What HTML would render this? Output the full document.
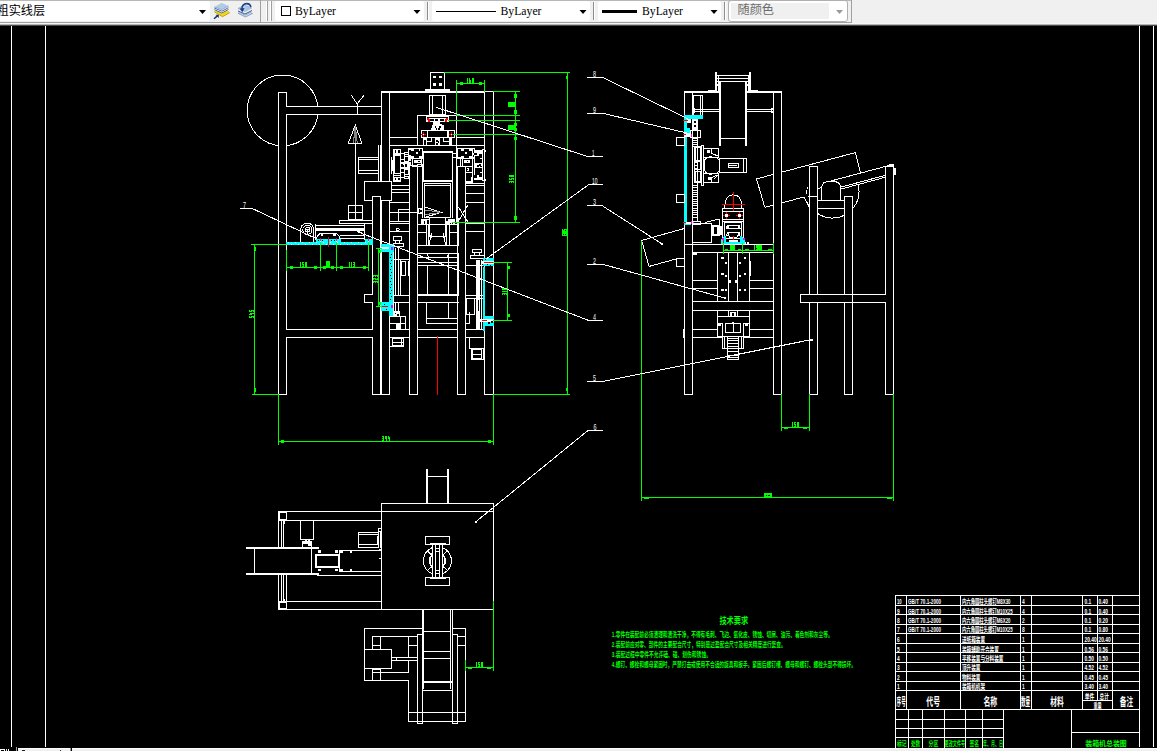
<!DOCTYPE html>
<html><head><meta charset="utf-8"><title>CAD</title>
<style>
html,body{margin:0;padding:0;background:#000;overflow:hidden}
body{width:1157px;height:751px;position:relative;font-family:"Liberation Sans",sans-serif}
#cv{position:absolute;left:0;top:0}
.t{font-family:"Liberation Sans","Noto Sans CJK SC",sans-serif;font-weight:bold}
.n{font-family:"Liberation Sans",sans-serif}
</style></head><body>
<svg id="cv" width="1157" height="751" viewBox="0 0 1157 751" shape-rendering="crispEdges" stroke-linecap="butt" fill="none">
<rect x="0" y="0" width="1157" height="751" style="fill:#000"/>
<path d="M11.5 26V747" stroke="#fff"/>
<path d="M45.5 26V747" stroke="#fff"/>
<path d="M1139.5 26V747" stroke="#fff"/>
<path d="M1153.5 26V747" stroke="#fff"/>
<circle cx="282.6" cy="110.4" r="35.4" stroke="#fff" fill="none"/>
<rect x="279" y="93" width="8" height="302" fill="#000"/>
<rect x="287" y="107" width="95" height="8" fill="#000"/>
<path d="M278.5 92V395" stroke="#fff"/>
<path d="M278 92.5H287" stroke="#fff"/>
<path d="M278 394.5H287" stroke="#fff"/>
<path d="M286.5 92V107" stroke="#fff"/>
<path d="M286.5 114V330" stroke="#fff"/>
<path d="M286.5 337V395" stroke="#fff"/>
<path d="M286 106.5H382" stroke="#fff"/>
<path d="M286 114.5H382" stroke="#fff"/>
<path d="M286 329.5H373" stroke="#fff"/>
<path d="M286 337.5H373" stroke="#fff"/>
<path d="M357.5 104V115" stroke="#fff"/>
<path d="M357.2 104.0L351.2 95.1" stroke="#fff"/>
<path d="M357.2 104.0L364.0 95.1" stroke="#fff"/>
<path d="M355.3 125.2L348.4 143.0L361.8 143.0Z" stroke="#fff" fill="none"/>
<path d="M355.3 126.0L353.4 143.0" stroke="#888"/>
<path d="M355.3 126.0L357.2 143.0" stroke="#888"/>
<path d="M355.5 127V144" stroke="#888"/>
<path d="M355.5 143V206" stroke="#fff"/>
<rect x="348.5" y="205.5" width="14" height="14" stroke="#fff" fill="none"/>
<path d="M355.5 205V220" stroke="#fff"/>
<path d="M348 212.5H363" stroke="#fff"/>
<rect x="339.5" y="220.5" width="33" height="3" stroke="#fff" fill="none"/>
<rect x="358.5" y="157.5" width="20" height="16" stroke="#fff" fill="none"/>
<path d="M358 159.5H379" stroke="#fff"/>
<path d="M358 170.5H379" stroke="#fff"/>
<path d="M378.5 145V182" stroke="#fff"/>
<path d="M380.5 145V182" stroke="#fff"/>
<rect x="373" y="197" width="8" height="198" fill="#000"/>
<path d="M372.5 196V295" stroke="#fff"/>
<path d="M372.5 302V330" stroke="#fff"/>
<path d="M372.5 337V395" stroke="#fff"/>
<path d="M380.5 196V395" stroke="#fff"/>
<path d="M372 196.5H381" stroke="#fff"/>
<path d="M372 394.5H381" stroke="#fff"/>
<rect x="365" y="295" width="15" height="8" fill="#000"/>
<rect x="373" y="330" width="7" height="8" fill="#000"/>
<path d="M364 294.5H373" stroke="#fff"/>
<path d="M364 302.5H373" stroke="#fff"/>
<path d="M364.5 294V303" stroke="#fff"/>
<path d="M315 225.5H365" stroke="#fff"/>
<rect x="315" y="228" width="50" height="3" fill="#fff"/>
<path d="M315.5 224V240" stroke="#fff"/>
<path d="M364.5 223V240" stroke="#fff"/>
<path d="M340 235.5H365" stroke="#fff"/>
<rect x="340" y="238" width="25" height="1" fill="#fff"/>
<path d="M300.5 242.0L300.5 229.5L302.0 225.5L305.0 223.4L309.5 223.4L312.5 225.5L313.8 229.5L313.8 242.0" stroke="#fff" fill="none"/>
<circle cx="307.4" cy="229.8" r="4.6" stroke="#fff" fill="none"/>
<circle cx="307.6" cy="229.6" r="2.2" stroke="#fff" fill="none"/>
<path d="M305 229.5H310" stroke="#fff"/>
<path d="M307.5 229V234" stroke="#fff"/>
<path d="M316.4 239.0L317.4 236.0L319.6 233.8L337.0 233.8L339.2 236.0L340.1 239.0" stroke="#fff" fill="none"/>
<rect x="321" y="234" width="2" height="2" fill="#fff"/>
<rect x="333" y="234" width="3" height="2" fill="#fff"/>
<rect x="286" y="242" width="87" height="3" fill="#00ffff"/>
<rect x="316" y="239" width="25" height="3" fill="#00ffff"/>
<rect x="365" y="239" width="8" height="3" fill="#00ffff"/>
<rect x="288" y="242" width="1" height="1" fill="#fff"/>
<rect x="291" y="244" width="1" height="1" fill="#fff"/>
<rect x="295" y="242" width="1" height="1" fill="#fff"/>
<rect x="298" y="244" width="1" height="1" fill="#fff"/>
<rect x="302" y="242" width="1" height="1" fill="#fff"/>
<rect x="305" y="244" width="1" height="1" fill="#fff"/>
<rect x="309" y="242" width="1" height="1" fill="#fff"/>
<rect x="312" y="244" width="1" height="1" fill="#fff"/>
<rect x="316" y="242" width="1" height="1" fill="#fff"/>
<rect x="319" y="244" width="1" height="1" fill="#fff"/>
<rect x="323" y="242" width="1" height="1" fill="#fff"/>
<rect x="326" y="244" width="1" height="1" fill="#fff"/>
<rect x="330" y="242" width="1" height="1" fill="#fff"/>
<rect x="333" y="244" width="1" height="1" fill="#fff"/>
<rect x="337" y="242" width="1" height="1" fill="#fff"/>
<rect x="340" y="244" width="1" height="1" fill="#fff"/>
<rect x="344" y="242" width="1" height="1" fill="#fff"/>
<rect x="347" y="244" width="1" height="1" fill="#fff"/>
<rect x="351" y="242" width="1" height="1" fill="#fff"/>
<rect x="354" y="244" width="1" height="1" fill="#fff"/>
<rect x="358" y="242" width="1" height="1" fill="#fff"/>
<rect x="361" y="244" width="1" height="1" fill="#fff"/>
<rect x="365" y="242" width="1" height="1" fill="#fff"/>
<rect x="368" y="244" width="1" height="1" fill="#fff"/>
<rect x="318" y="240" width="1" height="1" fill="#000"/>
<rect x="322" y="240" width="1" height="1" fill="#000"/>
<rect x="331" y="240" width="1" height="1" fill="#000"/>
<rect x="334" y="240" width="1" height="1" fill="#000"/>
<path d="M328.5 237V247" stroke="#ff0000"/>
<rect x="320" y="238" width="1" height="2" fill="#ff0000"/>
<rect x="320" y="239" width="1" height="2" fill="#ff00ff"/>
<rect x="320" y="241" width="1" height="4" fill="#fff"/>
<rect x="336" y="238" width="1" height="2" fill="#ff0000"/>
<rect x="336" y="239" width="1" height="2" fill="#ff00ff"/>
<rect x="336" y="241" width="1" height="4" fill="#fff"/>
<rect x="368" y="238" width="1" height="2" fill="#ff0000"/>
<rect x="368" y="239" width="1" height="2" fill="#ff00ff"/>
<rect x="368" y="241" width="1" height="4" fill="#fff"/>
<path d="M357.8 231.4L361.0 232.6" stroke="#fff"/>
<rect x="381" y="91" width="104" height="2" fill="#fff"/>
<path d="M484 91.5H494" stroke="#fff"/>
<path d="M381.5 91V395" stroke="#fff"/>
<path d="M389.5 93V395" stroke="#fff"/>
<path d="M484.5 93V395" stroke="#fff"/>
<path d="M493.5 91V395" stroke="#fff"/>
<path d="M381 394.5H390" stroke="#fff"/>
<path d="M484 394.5H494" stroke="#fff"/>
<rect x="430.5" y="72.5" width="14" height="17" stroke="#fff" fill="none"/>
<rect x="425" y="89" width="25" height="2" fill="#fff"/>
<rect x="433" y="76" width="3" height="2" fill="#fff"/>
<rect x="439" y="76" width="3" height="2" fill="#fff"/>
<rect x="433" y="83" width="3" height="3" fill="#fff"/>
<rect x="439" y="83" width="3" height="3" fill="#fff"/>
<rect x="429.5" y="95.5" width="16" height="19" stroke="#fff" fill="none"/>
<path d="M432.5 95V115" stroke="#fff"/>
<path d="M442.5 95V115" stroke="#fff"/>
<rect x="417.5" y="115.5" width="39" height="30" stroke="#fff" fill="none"/>
<path d="M389 137.5H418" stroke="#fff"/>
<path d="M456 137.5H485" stroke="#fff"/>
<path d="M389 145.5H485" stroke="#fff"/>
<path d="M426 116.5H449" stroke="#fff"/>
<path d="M426.5 116V122" stroke="#fff"/>
<path d="M448.5 116V122" stroke="#fff"/>
<rect x="426" y="118" width="23" height="4" fill="#fff"/>
<rect x="430" y="119" width="4" height="2" fill="#000"/>
<rect x="440" y="119" width="4" height="2" fill="#000"/>
<rect x="435" y="119" width="3" height="2" fill="#000"/>
<rect x="427" y="118" width="2" height="2" fill="#ff0000"/>
<rect x="428" y="119" width="2" height="3" fill="#ff0000"/>
<rect x="446" y="118" width="2" height="2" fill="#ff0000"/>
<rect x="445" y="119" width="2" height="3" fill="#ff0000"/>
<rect x="433" y="121" width="7" height="6" fill="#fff"/>
<rect x="440" y="124" width="2" height="3" fill="#fff"/>
<rect x="432" y="125" width="12" height="5" fill="#fff"/>
<rect x="431" y="128" width="13" height="2" fill="#fff"/>
<rect x="435" y="126" width="1" height="2" fill="#000"/>
<rect x="439" y="126" width="2" height="2" fill="#000"/>
<rect x="436" y="128" width="1" height="2" fill="#000"/>
<rect x="438" y="128" width="2" height="2" fill="#000"/>
<rect x="421" y="130" width="34" height="8" fill="#fff"/>
<rect x="428" y="131" width="19" height="6" fill="#000"/>
<rect x="422" y="131" width="5" height="6" fill="#000"/>
<rect x="449" y="131" width="5" height="6" fill="#000"/>
<path d="M421 134.5H423" stroke="#ff0000"/>
<path d="M424 134.5H426" stroke="#ff0000"/>
<rect x="423" y="132" width="1" height="2" fill="#ff0000"/>
<rect x="423" y="135" width="1" height="2" fill="#ff0000"/>
<rect x="423" y="134" width="1" height="1" fill="#fff"/>
<path d="M449 134.5H451" stroke="#ff0000"/>
<path d="M452 134.5H454" stroke="#ff0000"/>
<rect x="451" y="132" width="1" height="2" fill="#ff0000"/>
<rect x="451" y="135" width="1" height="2" fill="#ff0000"/>
<rect x="451" y="134" width="1" height="1" fill="#fff"/>
<rect x="423" y="137" width="4" height="9" fill="#fff"/>
<rect x="449" y="137" width="3" height="9" fill="#fff"/>
<rect x="424" y="140" width="2" height="5" fill="#000"/>
<path d="M426.5 141.6L431.8 141.6L431.8 138.0" stroke="#fff" fill="none"/>
<path d="M449.0 141.6L443.6 141.6L443.6 138.0" stroke="#fff" fill="none"/>
<rect x="435" y="138" width="5" height="8" fill="#fff"/>
<rect x="436" y="140" width="2" height="2" fill="#000"/>
<rect x="438" y="141" width="1" height="2" fill="#000"/>
<rect x="436" y="143" width="2" height="2" fill="#000"/>
<rect x="422" y="151" width="31" height="2" fill="#fff"/>
<rect x="422" y="180" width="31" height="2" fill="#fff"/>
<path d="M423.5 151V182" stroke="#fff"/>
<path d="M452.5 151V182" stroke="#fff"/>
<rect x="424.5" y="183.5" width="26" height="34" stroke="#fff" fill="none"/>
<path d="M424 185.5H451" stroke="#fff"/>
<path d="M452.5 181V218" stroke="#fff"/>
<path d="M456.5 145V223" stroke="#fff"/>
<path d="M422.5 165V218" stroke="#fff"/>
<path d="M417.5 165V395" stroke="#fff"/>
<path d="M409.5 165V395" stroke="#fff"/>
<path d="M457.5 166V395" stroke="#fff"/>
<path d="M465.5 166V395" stroke="#fff"/>
<path d="M409 394.5H418" stroke="#fff"/>
<path d="M457 394.5H466" stroke="#fff"/>
<path d="M424.5 207.0L441.4 212.4L424.5 217.4" stroke="#fff" fill="none"/>
<path d="M425.0 210.0L441.0 212.3" stroke="#999"/>
<path d="M425.0 214.6L441.0 212.5" stroke="#999"/>
<rect x="417" y="208" width="6" height="6" fill="#fff"/>
<rect x="419" y="209" width="1" height="2" fill="#000"/>
<rect x="420" y="210" width="2" height="2" fill="#000"/>
<rect x="419" y="211" width="1" height="2" fill="#000"/>
<path d="M409 212.5H418" stroke="#fff"/>
<path d="M458.3 207.0L467.7 221.5" stroke="#fff"/>
<path d="M467.7 205.2L458.3 221.5" stroke="#fff"/>
<rect x="393.5" y="149.5" width="7" height="32" stroke="#fff" fill="none"/>
<rect x="394.5" y="149.5" width="6" height="4" stroke="#fff" fill="none"/>
<path d="M393 154.5H401" stroke="#fff"/>
<rect x="396" y="150" width="2" height="3" fill="#fff"/>
<rect x="394.5" y="155.5" width="6" height="18" stroke="#fff" fill="none"/>
<rect x="394.5" y="177.5" width="6" height="3" stroke="#fff" fill="none"/>
<rect x="396" y="178" width="2" height="2" fill="#fff"/>
<path d="M393 175.5H401" stroke="#fff"/>
<rect x="400.5" y="153.5" width="4" height="6" stroke="#fff" fill="none"/>
<rect x="404.5" y="152.5" width="4" height="2" stroke="#fff" fill="none"/>
<rect x="400" y="160" width="8" height="3" fill="#fff"/>
<rect x="401" y="160" width="4" height="2" fill="#000"/>
<rect x="405" y="157" width="3" height="4" fill="#000"/>
<rect x="400" y="163" width="8" height="5" fill="#fff"/>
<rect x="401" y="164" width="2" height="3" fill="#000"/>
<rect x="403" y="165" width="2" height="2" fill="#000"/>
<rect x="405" y="164" width="2" height="3" fill="#000"/>
<rect x="400" y="168" width="8" height="3" fill="#fff"/>
<rect x="401" y="169" width="4" height="2" fill="#000"/>
<rect x="405" y="170" width="3" height="5" fill="#000"/>
<rect x="400.5" y="172.5" width="4" height="5" stroke="#fff" fill="none"/>
<rect x="404.5" y="176.5" width="4" height="2" stroke="#fff" fill="none"/>
<rect x="404.5" y="156.5" width="4" height="18" stroke="#fff" fill="none"/>
<rect x="408" y="148" width="15" height="11" fill="#fff"/>
<rect x="411" y="151" width="11" height="5" fill="#000"/>
<rect x="414" y="149" width="5" height="9" fill="#000"/>
<rect x="416" y="152" width="2" height="2" fill="#fff"/>
<rect x="409" y="150" width="2" height="5" fill="#000"/>
<rect x="420" y="149" width="2" height="3" fill="#000"/>
<rect x="412.5" y="158.5" width="9" height="8" stroke="#fff" fill="none"/>
<rect x="414" y="160" width="7" height="3" fill="#fff"/>
<rect x="418" y="161" width="2" height="1" fill="#000"/>
<rect x="409.5" y="159.5" width="1" height="1" stroke="#fff" fill="none"/>
<rect x="409.5" y="162.5" width="1" height="3" stroke="#fff" fill="none"/>
<path d="M391.5 157V174" stroke="#fff"/>
<path d="M392.5 160V171" stroke="#fff"/>
<rect x="457" y="148" width="18" height="11" fill="#fff"/>
<rect x="461" y="151" width="11" height="5" fill="#000"/>
<rect x="464" y="149" width="5" height="9" fill="#000"/>
<rect x="465" y="152" width="2" height="2" fill="#fff"/>
<rect x="458" y="149" width="3" height="8" fill="#000"/>
<rect x="473" y="149" width="1" height="4" fill="#000"/>
<rect x="473" y="155" width="1" height="2" fill="#000"/>
<rect x="462.5" y="158.5" width="10" height="8" stroke="#fff" fill="none"/>
<rect x="464" y="160" width="6" height="3" fill="#fff"/>
<rect x="467" y="161" width="1" height="1" fill="#000"/>
<path d="M460.5 158V167" stroke="#fff"/>
<path d="M472.5 148V184" stroke="#fff"/>
<rect x="467" y="168" width="2" height="3" fill="#fff"/>
<rect x="467" y="169" width="1" height="1" fill="#000"/>
<rect x="466" y="172" width="7" height="11" fill="#fff"/>
<rect x="466" y="176" width="5" height="5" fill="#000"/>
<rect x="468" y="173" width="4" height="4" fill="#000"/>
<rect x="466" y="173" width="2" height="3" fill="#000"/>
<rect x="474" y="150" width="9" height="30" fill="#fff"/>
<rect x="475" y="156" width="5" height="7" fill="#000"/>
<rect x="475" y="159" width="8" height="4" fill="#000"/>
<rect x="475" y="168" width="5" height="7" fill="#000"/>
<rect x="475" y="168" width="8" height="4" fill="#000"/>
<rect x="479" y="154" width="4" height="4" fill="#000"/>
<rect x="479" y="173" width="4" height="4" fill="#000"/>
<rect x="474" y="153" width="3" height="2" fill="#000"/>
<rect x="474" y="175" width="3" height="3" fill="#000"/>
<rect x="477" y="165" width="2" height="2" fill="#000"/>
<rect x="479" y="164" width="2" height="2" fill="#000"/>
<rect x="480" y="166" width="2" height="1" fill="#000"/>
<rect x="482.5" y="149.5" width="2" height="31" stroke="#fff" fill="none"/>
<rect x="485" y="150" width="1" height="2" fill="#fff"/>
<rect x="485" y="179" width="1" height="2" fill="#fff"/>
<path d="M466 183.5H485" stroke="#fff"/>
<path d="M452 153.5H458" stroke="#fff"/>
<path d="M452 157.5H458" stroke="#fff"/>
<path d="M389 185.5H410" stroke="#fff"/>
<path d="M389 189.5H410" stroke="#fff"/>
<path d="M389 192.5H410" stroke="#fff"/>
<path d="M389 202.5H410" stroke="#fff"/>
<path d="M389 212.5H410" stroke="#fff"/>
<path d="M389 221.5H410" stroke="#fff"/>
<path d="M389 223.5H410" stroke="#fff"/>
<path d="M389 231.5H410" stroke="#fff"/>
<path d="M389 259.5H410" stroke="#fff"/>
<path d="M389 295.5H410" stroke="#fff"/>
<path d="M389 302.5H410" stroke="#fff"/>
<rect x="398.5" y="209.5" width="11" height="12" stroke="#fff" fill="none"/>
<path d="M465 185.5H485" stroke="#fff"/>
<path d="M465 193.5H485" stroke="#fff"/>
<path d="M465 202.5H485" stroke="#fff"/>
<path d="M465 222.5H485" stroke="#fff"/>
<path d="M465 223.5H485" stroke="#fff"/>
<path d="M465 231.5H485" stroke="#fff"/>
<path d="M465 265.5H485" stroke="#fff"/>
<path d="M465 295.5H485" stroke="#fff"/>
<path d="M465 298.5H485" stroke="#fff"/>
<path d="M452 222.5H466" stroke="#fff"/>
<rect x="364.5" y="181.5" width="27" height="19" stroke="#fff" fill="#000"/>
<rect x="373" y="197" width="8" height="4" fill="#000"/>
<path d="M372.5 196V201" stroke="#fff"/>
<path d="M380.5 196V201" stroke="#fff"/>
<path d="M372 196.5H381" stroke="#fff"/>
<path d="M409 165.5H418" stroke="#fff"/>
<path d="M417 164.5H423" stroke="#fff"/>
<path d="M457 166.5H466" stroke="#fff"/>
<rect x="417.5" y="224.5" width="41" height="21" stroke="#fff" fill="none"/>
<path d="M417 232.5H427" stroke="#fff"/>
<path d="M449 232.5H459" stroke="#fff"/>
<path d="M426.5 224V246" stroke="#fff"/>
<path d="M428.5 224V246" stroke="#fff"/>
<path d="M446.5 224V246" stroke="#fff"/>
<path d="M449.5 224V246" stroke="#fff"/>
<path d="M429.5 218V237" stroke="#fff"/>
<path d="M445.5 218V237" stroke="#fff"/>
<path d="M429 236.5H446" stroke="#fff"/>
<path d="M431.3 233.3L429.0 244.6" stroke="#fff"/>
<path d="M443.3 233.3L445.6 244.6" stroke="#fff"/>
<path d="M431.5 233V238" stroke="#fff"/>
<path d="M443.5 233V238" stroke="#fff"/>
<rect x="421" y="219" width="9" height="5" fill="#fff"/>
<rect x="445" y="219" width="10" height="5" fill="#fff"/>
<rect x="424" y="221" width="1" height="1" fill="#000"/>
<rect x="424" y="222" width="1" height="2" fill="#000"/>
<rect x="427" y="220" width="2" height="2" fill="#000"/>
<rect x="427" y="222" width="2" height="2" fill="#000"/>
<rect x="446" y="219" width="2" height="2" fill="#000"/>
<rect x="450" y="223" width="1" height="1" fill="#000"/>
<rect x="452" y="223" width="1" height="1" fill="#000"/>
<path d="M417.5 218V225" stroke="#fff"/>
<path d="M458.5 218V225" stroke="#fff"/>
<rect x="417.5" y="253.5" width="41" height="42" stroke="#fff" fill="none"/>
<path d="M417 257.5H459" stroke="#fff"/>
<path d="M417 262.5H459" stroke="#fff"/>
<path d="M417 265.5H459" stroke="#fff"/>
<path d="M427.5 265V295" stroke="#fff"/>
<path d="M448.5 253V295" stroke="#fff"/>
<path d="M417 294.5H459" stroke="#fff"/>
<path d="M427.0 254.0L429.0 258.0" stroke="#fff"/>
<path d="M448.3 254.0L446.5 258.0" stroke="#fff"/>
<path d="M417 302.5H459" stroke="#fff"/>
<rect x="426.5" y="302.5" width="22" height="16" stroke="#fff" fill="none"/>
<rect x="426.5" y="318.5" width="31" height="5" stroke="#fff" fill="none"/>
<path d="M389 329.5H410" stroke="#fff"/>
<path d="M417 329.5H458" stroke="#fff"/>
<path d="M465 329.5H485" stroke="#fff"/>
<path d="M389 337.5H410" stroke="#fff"/>
<path d="M417 337.5H458" stroke="#fff"/>
<path d="M465 337.5H485" stroke="#fff"/>
<path d="M437.5 336V395" stroke="#ff0000"/>
<circle cx="397.9" cy="229.6" r="1.4" stroke="#fff" fill="none"/>
<rect x="393.5" y="236.5" width="8" height="4" stroke="#fff" fill="none"/>
<rect x="395.5" y="240.5" width="4" height="3" stroke="#fff" fill="none"/>
<rect x="393.5" y="243.5" width="10" height="3" stroke="#fff" fill="none"/>
<path d="M472.1 252.6L472.1 250.4L473.4 249.4L480.6 249.4L481.8 250.4L481.8 252.6Z" stroke="#fff" fill="none"/>
<rect x="474.5" y="252.5" width="5" height="3" stroke="#fff" fill="none"/>
<rect x="470.5" y="255.5" width="14" height="3" stroke="#fff" fill="none"/>
<rect x="381" y="244" width="13" height="8" fill="#00ffff"/>
<rect x="381" y="247" width="8" height="2" fill="#fff"/>
<rect x="391" y="247" width="2" height="3" fill="#ff00ff"/>
<rect x="389" y="252" width="5" height="50" fill="#00ffff"/>
<rect x="391" y="254" width="1" height="1" fill="#000"/>
<rect x="390" y="257" width="1" height="1" fill="#000"/>
<rect x="391" y="260" width="1" height="1" fill="#000"/>
<rect x="390" y="263" width="1" height="1" fill="#000"/>
<rect x="391" y="266" width="1" height="1" fill="#000"/>
<rect x="390" y="269" width="1" height="1" fill="#000"/>
<rect x="391" y="272" width="1" height="1" fill="#000"/>
<rect x="390" y="275" width="1" height="1" fill="#000"/>
<rect x="391" y="278" width="1" height="1" fill="#000"/>
<rect x="390" y="281" width="1" height="1" fill="#000"/>
<rect x="391" y="284" width="1" height="1" fill="#000"/>
<rect x="390" y="287" width="1" height="1" fill="#000"/>
<rect x="391" y="290" width="1" height="1" fill="#000"/>
<rect x="390" y="293" width="1" height="1" fill="#000"/>
<rect x="391" y="296" width="1" height="1" fill="#000"/>
<rect x="390" y="299" width="1" height="1" fill="#000"/>
<rect x="381" y="302" width="13" height="9" fill="#00ffff"/>
<rect x="389" y="310" width="5" height="7" fill="#00ffff"/>
<path d="M382 306.5H388" stroke="#ff0000"/>
<rect x="391" y="305" width="2" height="3" fill="#ff00ff"/>
<rect x="384" y="304" width="1" height="1" fill="#000"/>
<rect x="386" y="309" width="1" height="1" fill="#000"/>
<rect x="393" y="311" width="7" height="6" fill="#fff"/>
<rect x="395" y="313" width="1" height="1" fill="#000"/>
<rect x="397" y="314" width="2" height="2" fill="#000"/>
<path d="M393.5 252V312" stroke="#fff"/>
<path d="M395.5 248V295" stroke="#fff"/>
<path d="M395.5 302V312" stroke="#fff"/>
<path d="M398.5 248V295" stroke="#fff"/>
<path d="M398.5 302V312" stroke="#fff"/>
<path d="M400.5 259V296" stroke="#fff"/>
<rect x="401.5" y="261.5" width="4" height="14" stroke="#fff" fill="none"/>
<path d="M408.5 261V276" stroke="#fff"/>
<rect x="389.5" y="316.5" width="16" height="13" stroke="#fff" fill="none"/>
<path d="M400.5 316V330" stroke="#fff"/>
<path d="M389 323.5H406" stroke="#fff"/>
<rect x="396" y="323" width="5" height="7" fill="#fff"/>
<rect x="389.5" y="337.5" width="14" height="9" stroke="#fff" fill="none"/>
<rect x="392.5" y="338.5" width="11" height="7" stroke="#fff" fill="none"/>
<path d="M392 342.5H404" stroke="#fff"/>
<path d="M401.5 338V346" stroke="#fff"/>
<rect x="483" y="258" width="11" height="8" fill="#00ffff"/>
<rect x="482" y="261" width="12" height="3" fill="#fff"/>
<path d="M484 262.5H493" stroke="#ff0000"/>
<rect x="487" y="264" width="1" height="1" fill="#000"/>
<rect x="490" y="265" width="1" height="1" fill="#000"/>
<rect x="485" y="259" width="1" height="1" fill="#000"/>
<rect x="483" y="267" width="2" height="64" fill="#00ffff"/>
<rect x="483" y="316" width="11" height="10" fill="#00ffff"/>
<rect x="480" y="319" width="14" height="3" fill="#fff"/>
<path d="M481 320.5H487" stroke="#ff0000"/>
<rect x="488" y="322" width="2" height="2" fill="#000"/>
<rect x="491" y="321" width="2" height="2" fill="#000"/>
<path d="M476.5 260V330" stroke="#fff"/>
<rect x="477" y="260" width="3" height="70" fill="#fff"/>
<path d="M481.5 260V330" stroke="#fff"/>
<rect x="478" y="300" width="1" height="11" fill="#000"/>
<rect x="466.5" y="298.5" width="8" height="16" stroke="#fff" fill="none"/>
<path d="M469.5 312V324" stroke="#fff"/>
<path d="M465 323.5H470" stroke="#fff"/>
<rect x="469.5" y="337.5" width="15" height="11" stroke="#fff" fill="none"/>
<rect x="471.5" y="348.5" width="12" height="11" stroke="#fff" fill="none"/>
<rect x="472.5" y="349.5" width="9" height="9" stroke="#fff" fill="none"/>
<path d="M472 354.5H482" stroke="#fff"/>
<path d="M380.5 329V338" stroke="#fff"/>
<path d="M444 72.5H570" stroke="#00ff00"/>
<path d="M567.5 72V395" stroke="#00ff00"/>
<path d="M493 394.5H570" stroke="#00ff00"/>
<path d="M562 235h1v1h-1zM563 235h1v1h-1zM564 235h1v1h-1zM565 235h1v1h-1zM566 235h1v1h-1zM562 234h1v1h-1zM562 233h1v1h-1zM563 233h1v1h-1zM564 234h1v1h-1zM564 233h1v1h-1zM565 233h1v1h-1zM566 234h1v1h-1zM566 233h1v1h-1zM562 232h1v1h-1zM562 231h1v1h-1zM563 232h1v1h-1zM563 231h1v1h-1zM564 232h1v1h-1zM564 231h1v1h-1zM565 232h1v1h-1zM565 231h1v1h-1zM566 232h1v1h-1zM566 231h1v1h-1zM562 230h1v1h-1zM562 229h1v1h-1zM563 230h1v1h-1zM564 230h1v1h-1zM564 229h1v1h-1zM565 229h1v1h-1zM566 230h1v1h-1zM566 229h1v1h-1z" fill="#00ff00"/>
<rect x="566" y="76" width="1" height="3" fill="#00ff00"/>
<rect x="566" y="388" width="1" height="3" fill="#00ff00"/>
<path d="M456 83.5H485" stroke="#00ff00"/>
<path d="M456.5 80V116" stroke="#00ff00"/>
<path d="M484.5 80V92" stroke="#00ff00"/>
<rect x="460" y="82" width="3" height="3" fill="#00ff00"/>
<rect x="479" y="82" width="3" height="3" fill="#00ff00"/>
<path d="M467 78h1v1h-1zM467 79h1v1h-1zM467 80h1v1h-1zM467 81h1v1h-1zM467 82h1v1h-1zM469 78h1v1h-1zM469 79h1v1h-1zM469 80h1v1h-1zM470 80h1v1h-1zM469 81h1v1h-1zM470 81h1v1h-1zM469 82h1v1h-1zM470 82h1v1h-1zM472 78h1v1h-1zM473 78h1v1h-1zM472 79h1v1h-1zM473 79h1v1h-1zM472 80h1v1h-1zM473 80h1v1h-1zM472 81h1v1h-1zM473 81h1v1h-1zM472 82h1v1h-1zM473 82h1v1h-1z" fill="#00ff00"/>
<path d="M515.5 91V223" stroke="#00ff00"/>
<path d="M493 91.5H520" stroke="#00ff00"/>
<path d="M456 115.5H520" stroke="#00ff00"/>
<path d="M448 120.5H520" stroke="#00ff00"/>
<path d="M453 134.5H520" stroke="#00ff00"/>
<path d="M452 222.5H520" stroke="#00ff00"/>
<rect x="514" y="94" width="3" height="4" fill="#00ff00"/>
<rect x="514" y="110" width="3" height="4" fill="#00ff00"/>
<rect x="514" y="123" width="3" height="3" fill="#00ff00"/>
<rect x="514" y="128" width="3" height="3" fill="#00ff00"/>
<rect x="514" y="137" width="3" height="3" fill="#00ff00"/>
<rect x="514" y="216" width="3" height="4" fill="#00ff00"/>
<rect x="508" y="102" width="7" height="5" fill="#00ff00"/>
<rect x="508" y="125" width="7" height="5" fill="#00ff00"/>
<path d="M509 182h1v1h-1zM509 181h1v1h-1zM510 181h1v1h-1zM511 182h1v1h-1zM511 181h1v1h-1zM512 181h1v1h-1zM513 182h1v1h-1zM513 181h1v1h-1zM509 179h1v1h-1zM509 178h1v1h-1zM510 179h1v1h-1zM511 179h1v1h-1zM511 178h1v1h-1zM512 178h1v1h-1zM513 179h1v1h-1zM513 178h1v1h-1zM509 176h1v1h-1zM509 175h1v1h-1zM510 176h1v1h-1zM510 175h1v1h-1zM511 176h1v1h-1zM511 175h1v1h-1zM512 176h1v1h-1zM512 175h1v1h-1zM513 176h1v1h-1zM513 175h1v1h-1z" fill="#00ff00"/>
<path d="M251 244.5H287" stroke="#00ff00"/>
<path d="M254.5 244V395" stroke="#00ff00"/>
<path d="M252 394.5H279" stroke="#00ff00"/>
<path d="M249 317h1v1h-1zM249 316h1v1h-1zM250 317h1v1h-1zM251 317h1v1h-1zM251 316h1v1h-1zM252 316h1v1h-1zM253 317h1v1h-1zM253 316h1v1h-1zM249 314h1v1h-1zM250 314h1v1h-1zM250 313h1v1h-1zM251 314h1v1h-1zM251 313h1v1h-1zM252 313h1v1h-1zM253 313h1v1h-1zM249 311h1v1h-1zM249 310h1v1h-1zM250 311h1v1h-1zM251 311h1v1h-1zM251 310h1v1h-1zM252 310h1v1h-1zM253 311h1v1h-1zM253 310h1v1h-1z" fill="#00ff00"/>
<rect x="255" y="247" width="1" height="4" fill="#00ff00"/>
<rect x="255" y="388" width="1" height="4" fill="#00ff00"/>
<path d="M286.5 250V271" stroke="#00ff00"/>
<path d="M286 267.5H369" stroke="#00ff00"/>
<path d="M320.5 242V271" stroke="#00ff00"/>
<path d="M336.5 242V271" stroke="#00ff00"/>
<path d="M368.5 242V271" stroke="#00ff00"/>
<rect x="290" y="266" width="3" height="3" fill="#00ff00"/>
<rect x="314" y="266" width="3" height="3" fill="#00ff00"/>
<rect x="323" y="266" width="3" height="3" fill="#00ff00"/>
<rect x="331" y="266" width="3" height="3" fill="#00ff00"/>
<rect x="340" y="266" width="3" height="3" fill="#00ff00"/>
<rect x="363" y="266" width="3" height="3" fill="#00ff00"/>
<path d="M300 262h1v1h-1zM300 263h1v1h-1zM300 264h1v1h-1zM300 265h1v1h-1zM300 266h1v1h-1zM302 262h1v1h-1zM303 262h1v1h-1zM302 263h1v1h-1zM302 264h1v1h-1zM303 264h1v1h-1zM303 265h1v1h-1zM302 266h1v1h-1zM303 266h1v1h-1zM305 262h1v1h-1zM306 262h1v1h-1zM305 263h1v1h-1zM306 263h1v1h-1zM305 264h1v1h-1zM306 264h1v1h-1zM305 265h1v1h-1zM306 265h1v1h-1zM305 266h1v1h-1zM306 266h1v1h-1z" fill="#00ff00"/>
<rect x="326" y="261" width="4" height="6" fill="#00ff00"/>
<path d="M349 262h1v1h-1zM349 263h1v1h-1zM349 264h1v1h-1zM349 265h1v1h-1zM349 266h1v1h-1zM351 262h1v1h-1zM351 263h1v1h-1zM351 264h1v1h-1zM351 265h1v1h-1zM351 266h1v1h-1zM353 262h1v1h-1zM354 262h1v1h-1zM354 263h1v1h-1zM353 264h1v1h-1zM354 264h1v1h-1zM354 265h1v1h-1zM353 266h1v1h-1zM354 266h1v1h-1z" fill="#00ff00"/>
<path d="M378.5 248V307" stroke="#00ff00"/>
<path d="M376 306.5H382" stroke="#00ff00"/>
<path d="M376 248.5H382" stroke="#00ff00"/>
<path d="M373 282h1v1h-1zM373 281h1v1h-1zM374 281h1v1h-1zM375 282h1v1h-1zM375 281h1v1h-1zM376 281h1v1h-1zM377 282h1v1h-1zM377 281h1v1h-1zM373 279h1v1h-1zM373 278h1v1h-1zM374 278h1v1h-1zM375 279h1v1h-1zM375 278h1v1h-1zM376 279h1v1h-1zM377 279h1v1h-1zM377 278h1v1h-1zM373 276h1v1h-1zM373 275h1v1h-1zM374 275h1v1h-1zM375 276h1v1h-1zM375 275h1v1h-1zM376 275h1v1h-1zM377 276h1v1h-1zM377 275h1v1h-1z" fill="#00ff00"/>
<rect x="379" y="250" width="2" height="3" fill="#00ff00"/>
<rect x="379" y="302" width="2" height="3" fill="#00ff00"/>
<path d="M278.5 394V445" stroke="#00ff00"/>
<path d="M493.5 394V445" stroke="#00ff00"/>
<path d="M278 441.5H494" stroke="#00ff00"/>
<rect x="281" y="440" width="3" height="3" fill="#00ff00"/>
<rect x="488" y="440" width="3" height="3" fill="#00ff00"/>
<path d="M382 436h1v1h-1zM383 436h1v1h-1zM383 437h1v1h-1zM382 438h1v1h-1zM383 438h1v1h-1zM383 439h1v1h-1zM382 440h1v1h-1zM383 440h1v1h-1zM385 436h1v1h-1zM386 436h1v1h-1zM385 437h1v1h-1zM386 437h1v1h-1zM385 438h1v1h-1zM386 438h1v1h-1zM386 439h1v1h-1zM386 440h1v1h-1zM388 436h1v1h-1zM388 437h1v1h-1zM389 437h1v1h-1zM388 438h1v1h-1zM389 438h1v1h-1zM389 439h1v1h-1zM389 440h1v1h-1z" fill="#00ff00"/>
<path d="M493 262.5H512" stroke="#00ff00"/>
<path d="M493 320.5H512" stroke="#00ff00"/>
<path d="M507.5 262V321" stroke="#00ff00"/>
<path d="M502 294h1v1h-1zM502 293h1v1h-1zM503 293h1v1h-1zM504 294h1v1h-1zM504 293h1v1h-1zM505 293h1v1h-1zM506 294h1v1h-1zM506 293h1v1h-1zM502 291h1v1h-1zM503 291h1v1h-1zM504 291h1v1h-1zM505 291h1v1h-1zM506 291h1v1h-1zM502 289h1v1h-1zM502 288h1v1h-1zM503 289h1v1h-1zM503 288h1v1h-1zM504 289h1v1h-1zM504 288h1v1h-1zM505 289h1v1h-1zM505 288h1v1h-1zM506 289h1v1h-1zM506 288h1v1h-1z" fill="#00ff00"/>
<rect x="508" y="266" width="2" height="3" fill="#00ff00"/>
<rect x="508" y="314" width="2" height="3" fill="#00ff00"/>
<path d="M764.8 207.4L756.5 178.9L855.3 152.6L860.5 172.6" stroke="#fff" fill="none"/>
<path d="M764.8 207.4L803.9 197.0" stroke="#fff"/>
<path d="M803.9 196.6L809.0 206.4" stroke="#fff"/>
<path d="M807.4 186.5A26.5 26.5 0 0 0 807 194" stroke="#fff"/>
<path d="M826.0 184.0L892.9 164.0L892.9 168.4L886.0 176.0L841.5 188.6L838.0 194.0Z" stroke="none" fill="#000"/>
<path d="M831.5 180.8L892.9 164.5" stroke="#fff"/>
<path d="M841.5 188.9L885.4 177.2" stroke="#fff"/>
<path d="M841.5 187.0L885.4 175.3" stroke="#fff"/>
<rect x="889" y="164" width="5" height="3" fill="#fff"/>
<rect x="894.5" y="168.5" width="1" height="6" stroke="#fff" fill="none"/>
<rect x="810" y="167" width="8" height="228" fill="#000"/>
<rect x="886" y="167" width="8" height="228" fill="#000"/>
<rect x="818" y="196" width="35" height="199" fill="#000"/>
<rect x="818" y="190" width="27" height="11" fill="#000"/>
<path d="M817.7 213.5A26.5 26.5 0 0 0 844.6 215.2" stroke="#fff"/>
<path d="M858.2 185A26.5 26.5 0 0 1 852.6 208.8" stroke="#fff"/>
<path d="M809.5 166V295" stroke="#fff"/>
<path d="M809.5 302V395" stroke="#fff"/>
<path d="M817.5 166V295" stroke="#fff"/>
<path d="M817.5 302V395" stroke="#fff"/>
<path d="M809 166.5H818" stroke="#fff"/>
<path d="M809 394.5H818" stroke="#fff"/>
<path d="M885.5 166V395" stroke="#fff"/>
<path d="M893.5 166V395" stroke="#fff"/>
<path d="M885 166.5H894" stroke="#fff"/>
<path d="M885 394.5H894" stroke="#fff"/>
<path d="M844.5 196V295" stroke="#fff"/>
<path d="M844.5 302V395" stroke="#fff"/>
<path d="M852.5 196V395" stroke="#fff"/>
<path d="M844 394.5H853" stroke="#fff"/>
<path d="M817 200.5H845" stroke="#fff"/>
<path d="M844 196.5H853" stroke="#fff"/>
<path d="M808 196.5H818" stroke="#fff"/>
<path d="M817 208.5H845" stroke="#fff"/>
<path d="M821.5 200.4V188.5Q821.5 181 831 181Q840.9 181 840.9 188.5V200.4" stroke="#fff"/>
<path d="M817.6 189.0L821.5 187.6" stroke="#fff"/>
<rect x="801" y="295" width="85" height="8" fill="#000"/>
<path d="M800 294.5H886" stroke="#fff"/>
<path d="M800 302.5H886" stroke="#fff"/>
<path d="M800.5 294V303" stroke="#fff"/>
<path d="M852.5 294V303" stroke="#fff"/>
<path d="M683.9 228.6L641.6 240.4L649.1 266.4L676.4 258.9" stroke="#fff" fill="none"/>
<path d="M705.1 222.5L719.5 219.0" stroke="#fff"/>
<path d="M719.5 219V226" stroke="#fff"/>
<rect x="685" y="93" width="8" height="302" fill="#000"/>
<rect x="774" y="93" width="8" height="302" fill="#000"/>
<rect x="684" y="91" width="36" height="2" fill="#fff"/>
<rect x="746" y="91" width="36" height="2" fill="#fff"/>
<path d="M684.5 91V395" stroke="#fff"/>
<path d="M692.5 93V395" stroke="#fff"/>
<path d="M773.5 93V395" stroke="#fff"/>
<path d="M781.5 91V395" stroke="#fff"/>
<path d="M684 394.5H693" stroke="#fff"/>
<path d="M773 394.5H782" stroke="#fff"/>
<rect x="715" y="72" width="2" height="19" fill="#fff"/>
<rect x="749" y="72" width="2" height="19" fill="#fff"/>
<path d="M718.5 75V91" stroke="#fff"/>
<path d="M748.5 75V91" stroke="#fff"/>
<path d="M717 75.5H750" stroke="#fff"/>
<path d="M717 78.5H750" stroke="#fff"/>
<path d="M717 81.5H750" stroke="#fff"/>
<rect x="708" y="90" width="8" height="2" fill="#fff"/>
<rect x="751" y="90" width="7" height="2" fill="#fff"/>
<rect x="715" y="84" width="6" height="2" fill="#fff"/>
<rect x="746" y="84" width="5" height="2" fill="#fff"/>
<rect x="719" y="81" width="2" height="65" fill="#fff"/>
<rect x="745" y="81" width="2" height="65" fill="#fff"/>
<path d="M720 138.5H747" stroke="#fff"/>
<path d="M693 109.5H721" stroke="#fff"/>
<path d="M693 111.5H721" stroke="#fff"/>
<path d="M746 109.5H774" stroke="#fff"/>
<path d="M746 111.5H774" stroke="#fff"/>
<rect x="693" y="108" width="2" height="5" fill="#fff"/>
<rect x="771.5" y="108.5" width="2" height="4" stroke="#fff" fill="none"/>
<rect x="693.5" y="95.5" width="9" height="20" stroke="#fff" fill="none"/>
<path d="M700.5 95V116" stroke="#fff"/>
<rect x="684" y="115" width="19" height="4" fill="#00ffff"/>
<rect x="684" y="118" width="3" height="107" fill="#00ffff"/>
<rect x="684" y="128" width="6" height="5" fill="#00ffff"/>
<rect x="684" y="222" width="7" height="3" fill="#00ffff"/>
<rect x="687" y="119" width="4" height="4" fill="#fff"/>
<path d="M683 120.5H688" stroke="#ff0000"/>
<rect x="684" y="133" width="7" height="4" fill="#fff"/>
<path d="M683 134.5H686" stroke="#ff0000"/>
<rect x="691" y="134" width="2" height="3" fill="#ff00ff"/>
<rect x="686" y="222" width="6" height="2" fill="#fff"/>
<rect x="691" y="221" width="3" height="3" fill="#ff00ff"/>
<path d="M683 222.5H686" stroke="#ff0000"/>
<rect x="676.5" y="137.5" width="8" height="8" stroke="#fff" fill="none"/>
<rect x="676.5" y="194.5" width="8" height="8" stroke="#fff" fill="none"/>
<rect x="676.5" y="258.5" width="8" height="8" stroke="#fff" fill="none"/>
<rect x="690.5" y="130.5" width="10" height="7" stroke="#fff" fill="none"/>
<path d="M692.5 119V222" stroke="#fff"/>
<path d="M697.5 119V222" stroke="#fff"/>
<rect x="693" y="119" width="4" height="11" fill="#fff"/>
<rect x="694" y="121" width="2" height="2" fill="#000"/>
<rect x="694" y="125" width="2" height="2" fill="#000"/>
<path d="M693 138.5H697" stroke="#fff"/>
<path d="M693 140.5H697" stroke="#fff"/>
<path d="M693 142.5H697" stroke="#fff"/>
<path d="M693 144.5H697" stroke="#fff"/>
<path d="M693 146.5H697" stroke="#fff"/>
<path d="M693 185.5H697" stroke="#fff"/>
<path d="M693 187.5H697" stroke="#fff"/>
<path d="M693 190.5H697" stroke="#fff"/>
<path d="M693 192.5H697" stroke="#fff"/>
<path d="M693 194.5H697" stroke="#fff"/>
<path d="M693 196.5H697" stroke="#fff"/>
<path d="M693 199.5H697" stroke="#fff"/>
<path d="M693 201.5H697" stroke="#fff"/>
<path d="M693 203.5H697" stroke="#fff"/>
<path d="M693 205.5H697" stroke="#fff"/>
<path d="M693 208.5H697" stroke="#fff"/>
<path d="M693 210.5H697" stroke="#fff"/>
<path d="M693 212.5H697" stroke="#fff"/>
<path d="M693 214.5H697" stroke="#fff"/>
<path d="M693 217.5H697" stroke="#fff"/>
<rect x="692.5" y="221.5" width="8" height="3" stroke="#fff" fill="none"/>
<rect x="694.5" y="146.5" width="7" height="36" stroke="#fff" fill="none"/>
<rect x="695.5" y="147.5" width="5" height="13" stroke="#fff" fill="none"/>
<rect x="695.5" y="171.5" width="5" height="10" stroke="#fff" fill="none"/>
<rect x="695" y="161" width="3" height="9" fill="#fff"/>
<rect x="695" y="163" width="2" height="2" fill="#000"/>
<rect x="695" y="166" width="2" height="2" fill="#000"/>
<rect x="697.5" y="161.5" width="3" height="8" stroke="#fff" fill="none"/>
<rect x="701.5" y="145.5" width="2" height="40" stroke="#fff" fill="none"/>
<rect x="703.5" y="148.5" width="15" height="9" stroke="#fff" fill="none"/>
<rect x="703.5" y="173.5" width="15" height="9" stroke="#fff" fill="none"/>
<rect x="707" y="150" width="3" height="3" fill="#fff"/>
<rect x="708" y="177" width="3" height="3" fill="#fff"/>
<path d="M711.4 148.5L711.4 153.4L718.9 156.4" stroke="#fff" fill="none"/>
<path d="M711.4 182.4L711.4 177.6L718.9 174.6" stroke="#fff" fill="none"/>
<path d="M714.4 178.6L718.4 174.4" stroke="#fff"/>
<path d="M707.0 157.3L716.4 157.3L719.2 160.4L719.2 170.6L716.4 173.6L707.0 173.6L704.4 170.6L704.4 160.4Z" stroke="#fff" fill="none"/>
<rect x="709" y="156" width="3" height="2" fill="#fff"/>
<rect x="709" y="173" width="3" height="2" fill="#fff"/>
<rect x="719.5" y="158.5" width="27" height="14" stroke="#fff" fill="none"/>
<path d="M743.5 158V173" stroke="#fff"/>
<rect x="728.5" y="163.5" width="10" height="4" stroke="#fff" fill="none"/>
<path d="M729 165.5H737" stroke="#fff"/>
<path d="M724.8 208.4V204.5Q726 194.8 733.3 194.8Q740.6 194.8 741.8 204.5V208.4" stroke="#fff"/>
<rect x="722.5" y="208.5" width="21" height="13" stroke="#fff" fill="none"/>
<path d="M722 211.5H744" stroke="#fff"/>
<path d="M723 215.5H730" stroke="#ff0000"/>
<path d="M726.5 212V219" stroke="#ff0000"/>
<rect x="725" y="214" width="3" height="3" fill="#fff"/>
<path d="M736 215.5H743" stroke="#ff0000"/>
<path d="M739.5 212V219" stroke="#ff0000"/>
<rect x="738" y="214" width="3" height="3" fill="#fff"/>
<path d="M722 219.5H744" stroke="#fff"/>
<path d="M722 204.5H745" stroke="#ff0000"/>
<path d="M733.5 192V211" stroke="#ff0000"/>
<rect x="722.5" y="221.5" width="21" height="17" stroke="#fff" fill="none"/>
<rect x="724.5" y="222.5" width="17" height="16" stroke="#fff" fill="none"/>
<path d="M727.0 228.0L728.6 225.6L738.0 225.6L739.6 228.0" stroke="#fff" fill="none"/>
<circle cx="727.6" cy="226.6" r="0.9" stroke="#fff" fill="none"/>
<circle cx="739.0" cy="226.6" r="0.9" stroke="#fff" fill="none"/>
<path d="M726 228.5H741" stroke="#fff"/>
<path d="M727 232.5H740" stroke="#fff"/>
<path d="M727.6 232.6L729.6 237.0L737.0 237.0L739.0 232.6" stroke="#fff" fill="none"/>
<circle cx="727.6" cy="234.6" r="0.9" stroke="#fff" fill="none"/>
<circle cx="739.0" cy="234.6" r="0.9" stroke="#fff" fill="none"/>
<path d="M733.5 236V242" stroke="#ff0000"/>
<rect x="692.5" y="223.5" width="19" height="19" stroke="#fff" fill="none"/>
<rect x="712.5" y="225.5" width="7" height="10" stroke="#fff" fill="none"/>
<rect x="713.5" y="226.5" width="4" height="8" stroke="#fff" fill="none"/>
<rect x="717" y="226" width="5" height="9" fill="#fff"/>
<path d="M721.4 244.5L721.4 239.4L724.6 236.0L726.4 236.0L726.4 241.8L740.2 241.8L740.2 236.0L742.0 236.0L745.2 239.4L745.2 244.5Z" stroke="none" fill="#00ffff"/>
<rect x="729" y="240" width="9" height="2" fill="#fff"/>
<path d="M723.5 239V244" stroke="#ff0000"/>
<rect x="722" y="238" width="2" height="2" fill="#ff00ff"/>
<rect x="743" y="238" width="2" height="2" fill="#ff00ff"/>
<rect x="745" y="242" width="2" height="3" fill="#fff"/>
<rect x="747" y="242" width="2" height="3" fill="#fff"/>
<rect x="746" y="242" width="1" height="2" fill="#000"/>
<path d="M684 244.5H774" stroke="#fff"/>
<path d="M692 252.5H774" stroke="#fff"/>
<path d="M723 250.5H774" stroke="#00ff00"/>
<path d="M723.5 243V254" stroke="#00ff00"/>
<path d="M742.5 243V254" stroke="#00ff00"/>
<path d="M773.5 243V254" stroke="#00ff00"/>
<rect x="730" y="245" width="5" height="6" fill="#00ff00"/>
<path d="M754 245h1v1h-1zM754 246h1v1h-1zM754 247h1v1h-1zM754 248h1v1h-1zM754 249h1v1h-1zM756 245h1v1h-1zM757 245h1v1h-1zM756 246h1v1h-1zM756 247h1v1h-1zM757 247h1v1h-1zM757 248h1v1h-1zM756 249h1v1h-1zM757 249h1v1h-1zM759 245h1v1h-1zM760 245h1v1h-1zM759 246h1v1h-1zM760 246h1v1h-1zM759 247h1v1h-1zM760 247h1v1h-1zM759 248h1v1h-1zM760 248h1v1h-1zM759 249h1v1h-1zM760 249h1v1h-1z" fill="#00ff00"/>
<rect x="757" y="245" width="5" height="6" fill="#00ff00"/>
<rect x="725" y="249" width="3" height="2" fill="#00ff00"/>
<rect x="738" y="249" width="3" height="2" fill="#00ff00"/>
<rect x="745" y="249" width="4" height="2" fill="#00ff00"/>
<rect x="768" y="249" width="4" height="2" fill="#00ff00"/>
<path d="M717.5 252V302" stroke="#fff"/>
<path d="M728.5 252V302" stroke="#fff"/>
<path d="M737.5 252V302" stroke="#fff"/>
<path d="M749.5 252V302" stroke="#fff"/>
<path d="M692 280.5H718" stroke="#fff"/>
<path d="M749 280.5H774" stroke="#fff"/>
<path d="M692 288.5H718" stroke="#fff"/>
<path d="M749 288.5H774" stroke="#fff"/>
<path d="M692 301.5H774" stroke="#fff"/>
<path d="M692 310.5H774" stroke="#fff"/>
<rect x="725" y="262" width="2" height="2" fill="#fff"/>
<rect x="739" y="262" width="2" height="2" fill="#fff"/>
<rect x="725" y="275" width="2" height="2" fill="#fff"/>
<rect x="739" y="275" width="2" height="2" fill="#fff"/>
<rect x="729" y="280" width="2" height="3" fill="#fff"/>
<rect x="735" y="280" width="2" height="3" fill="#fff"/>
<rect x="725" y="289" width="2" height="2" fill="#fff"/>
<rect x="739" y="289" width="2" height="2" fill="#fff"/>
<rect x="721" y="257" width="3" height="2" fill="#fff"/>
<rect x="744" y="257" width="2" height="2" fill="#fff"/>
<rect x="721" y="273" width="3" height="2" fill="#fff"/>
<rect x="744" y="273" width="2" height="2" fill="#fff"/>
<rect x="721" y="289" width="3" height="2" fill="#fff"/>
<rect x="744" y="289" width="2" height="2" fill="#fff"/>
<rect x="693" y="253" width="4" height="2" fill="#fff"/>
<rect x="693" y="288" width="3" height="2" fill="#fff"/>
<path d="M750.5 261V276" stroke="#fff"/>
<rect x="717" y="311" width="33" height="26" fill="#000"/>
<rect x="717.5" y="310.5" width="32" height="26" stroke="#fff" fill="none"/>
<path d="M717 316.5H750" stroke="#fff"/>
<path d="M728.5 310V316" stroke="#fff"/>
<path d="M737.5 310V316" stroke="#fff"/>
<rect x="730" y="312" width="2" height="4" fill="#fff"/>
<rect x="734" y="312" width="2" height="4" fill="#fff"/>
<path d="M730 312.5H736" stroke="#fff"/>
<rect x="725.5" y="323.5" width="15" height="9" stroke="#fff" fill="none"/>
<path d="M733.5 322V333" stroke="#fff"/>
<circle cx="733.0" cy="323.0" r="1.0" stroke="#fff" fill="none"/>
<path d="M722.5 323V337" stroke="#fff"/>
<path d="M743.5 323V337" stroke="#fff"/>
<path d="M717 323.5H723" stroke="#fff"/>
<path d="M743 323.5H750" stroke="#fff"/>
<rect x="718" y="324" width="3" height="2" fill="#fff"/>
<rect x="745" y="324" width="3" height="2" fill="#fff"/>
<path d="M692 329.5H718" stroke="#fff"/>
<path d="M749 329.5H774" stroke="#fff"/>
<path d="M692 337.5H718" stroke="#fff"/>
<path d="M749 337.5H774" stroke="#fff"/>
<path d="M717 337.5H723" stroke="#fff"/>
<path d="M743 337.5H750" stroke="#fff"/>
<rect x="722.5" y="336.5" width="21" height="12" stroke="#fff" fill="none"/>
<path d="M724.5 336V349" stroke="#fff"/>
<path d="M741.5 336V349" stroke="#fff"/>
<path d="M727.5 336V349" stroke="#fff"/>
<path d="M738.5 336V349" stroke="#fff"/>
<path d="M727 338.5H739" stroke="#fff"/>
<path d="M727 340.5H739" stroke="#fff"/>
<path d="M727 343.5H739" stroke="#fff"/>
<path d="M727 346.5H739" stroke="#fff"/>
<rect x="727.5" y="348.5" width="11" height="11" stroke="#fff" fill="none"/>
<path d="M727 351.5H739" stroke="#fff"/>
<path d="M727 355.5H739" stroke="#fff"/>
<path d="M727 357.5H739" stroke="#fff"/>
<path d="M683.5 329V338" stroke="#fff"/>
<path d="M683 329.5H685" stroke="#fff"/>
<path d="M683 337.5H685" stroke="#fff"/>
<path d="M641.5 241V501" stroke="#00ff00"/>
<path d="M893.5 394V501" stroke="#00ff00"/>
<path d="M641 497.5H894" stroke="#00ff00"/>
<rect x="764" y="493" width="8" height="5" fill="#00ff00"/>
<rect x="766" y="495" width="1" height="1" fill="#000"/>
<rect x="768" y="495" width="2" height="1" fill="#000"/>
<rect x="644" y="497" width="5" height="2" fill="#00ff00"/>
<rect x="887" y="497" width="5" height="2" fill="#00ff00"/>
<path d="M781.5 394V431" stroke="#00ff00"/>
<path d="M809.5 394V431" stroke="#00ff00"/>
<path d="M781 427.5H810" stroke="#00ff00"/>
<path d="M792 422h1v1h-1zM792 423h1v1h-1zM792 424h1v1h-1zM792 425h1v1h-1zM792 426h1v1h-1zM794 422h1v1h-1zM795 422h1v1h-1zM794 423h1v1h-1zM794 424h1v1h-1zM795 424h1v1h-1zM795 425h1v1h-1zM794 426h1v1h-1zM795 426h1v1h-1zM797 422h1v1h-1zM798 422h1v1h-1zM797 423h1v1h-1zM798 423h1v1h-1zM797 424h1v1h-1zM798 424h1v1h-1zM797 425h1v1h-1zM798 425h1v1h-1zM797 426h1v1h-1zM798 426h1v1h-1z" fill="#00ff00"/>
<rect x="784" y="427" width="4" height="2" fill="#00ff00"/>
<rect x="803" y="427" width="4" height="2" fill="#00ff00"/>
<rect x="426" y="469" width="2" height="35" fill="#fff"/>
<rect x="447" y="469" width="2" height="35" fill="#fff"/>
<path d="M427 476.5H449" stroke="#fff"/>
<rect x="381.5" y="503.5" width="112" height="106" stroke="#fff" fill="none"/>
<path d="M278 511.5H494" stroke="#fff"/>
<path d="M278.5 511V548" stroke="#fff"/>
<path d="M278.5 575V610" stroke="#fff"/>
<path d="M278 520.5H382" stroke="#fff"/>
<path d="M278 601.5H382" stroke="#fff"/>
<path d="M278 609.5H382" stroke="#fff"/>
<rect x="279.5" y="512.5" width="7" height="7" stroke="#fff" fill="none"/>
<rect x="279.5" y="602.5" width="7" height="6" stroke="#fff" fill="none"/>
<path d="M281.5 520V548" stroke="#fff"/>
<path d="M281.5 575V602" stroke="#fff"/>
<path d="M283.5 520V548" stroke="#fff"/>
<path d="M283.5 575V602" stroke="#fff"/>
<rect x="283" y="521" width="2" height="3" fill="#fff"/>
<rect x="283" y="599" width="2" height="2" fill="#fff"/>
<path d="M286.5 575V602" stroke="#fff"/>
<rect x="300.5" y="520.5" width="13" height="19" stroke="#fff" fill="none"/>
<rect x="302.5" y="541.5" width="9" height="6" stroke="#fff" fill="none"/>
<rect x="303" y="542" width="8" height="2" fill="#fff"/>
<rect x="305" y="539" width="2" height="3" fill="#fff"/>
<rect x="308" y="539" width="2" height="3" fill="#fff"/>
<rect x="308" y="543" width="3" height="3" fill="#fff"/>
<rect x="246" y="547" width="73" height="2" fill="#fff"/>
<rect x="246" y="573" width="73" height="2" fill="#fff"/>
<path d="M254.5 548V574" stroke="#fff"/>
<path d="M311.5 548V574" stroke="#fff"/>
<rect x="315" y="554" width="25" height="2" fill="#fff"/>
<rect x="315" y="566" width="25" height="2" fill="#fff"/>
<rect x="315" y="554" width="2" height="14" fill="#fff"/>
<rect x="338" y="554" width="2" height="14" fill="#fff"/>
<path d="M339.4 553.4L342.6 550.2L381.6 550.2" stroke="#fff" fill="none"/>
<path d="M339.4 568.4L342.6 571.5L381.6 571.5" stroke="#fff" fill="none"/>
<path d="M339.5 550V572" stroke="#fff"/>
<rect x="340" y="550" width="3" height="3" fill="#fff"/>
<rect x="340" y="569" width="3" height="3" fill="#fff"/>
<rect x="350" y="550" width="2" height="3" fill="#fff"/>
<rect x="350" y="569" width="2" height="3" fill="#fff"/>
<rect x="318" y="550" width="3" height="3" fill="#fff"/>
<rect x="335" y="550" width="3" height="3" fill="#fff"/>
<rect x="318" y="569" width="3" height="2" fill="#fff"/>
<rect x="335" y="569" width="3" height="2" fill="#fff"/>
<path d="M317 575.5H382" stroke="#fff"/>
<rect x="358.5" y="532.5" width="20" height="15" stroke="#fff" fill="none"/>
<path d="M358 534.5H379" stroke="#fff"/>
<path d="M358 544.5H379" stroke="#fff"/>
<path d="M377.5 536V545" stroke="#fff"/>
<rect x="378.5" y="528.5" width="3" height="3" stroke="#fff" fill="none"/>
<path d="M380.5 531V548" stroke="#fff"/>
<path d="M379 528.5H382" stroke="#fff"/>
<path d="M379 531.5H382" stroke="#fff"/>
<path d="M379 549.5H382" stroke="#fff"/>
<path d="M379 558.5H382" stroke="#fff"/>
<path d="M379 571.5H382" stroke="#fff"/>
<path d="M379 575.5H382" stroke="#fff"/>
<circle cx="437.4" cy="560.7" r="14.0" stroke="#fff" fill="none"/>
<circle cx="437.4" cy="560.7" r="8.2" stroke="#fff" fill="none"/>
<rect x="433" y="545" width="9" height="33" fill="#000"/>
<rect x="425.5" y="536.5" width="24" height="8" stroke="#fff" fill="none"/>
<rect x="425.5" y="577.5" width="24" height="8" stroke="#fff" fill="none"/>
<rect x="430" y="543" width="16" height="2" fill="#fff"/>
<rect x="430" y="577" width="16" height="2" fill="#fff"/>
<path d="M432.5 544V578" stroke="#fff"/>
<path d="M435.5 544V578" stroke="#fff"/>
<path d="M439.5 544V578" stroke="#fff"/>
<path d="M442.5 544V578" stroke="#fff"/>
<path d="M435 548.5H440" stroke="#fff"/>
<path d="M435 551.5H440" stroke="#fff"/>
<path d="M435 570.5H440" stroke="#fff"/>
<path d="M435 573.5H440" stroke="#fff"/>
<path d="M433 551Q428 560.7 433 570.5M442 551Q447 560.7 442 570.5" stroke="#fff"/>
<path d="M427.5 551.0L432.6 556.0" stroke="#fff"/>
<path d="M427.5 570.4L432.6 565.4" stroke="#fff"/>
<path d="M447.3 551.0L442.0 556.0" stroke="#fff"/>
<path d="M447.3 570.4L442.0 565.4" stroke="#fff"/>
<rect x="422" y="609" width="2" height="80" fill="#fff"/>
<path d="M450.5 609V689" stroke="#fff"/>
<path d="M452.5 609V689" stroke="#fff"/>
<path d="M424 631.5H451" stroke="#fff"/>
<path d="M424 651.5H451" stroke="#fff"/>
<path d="M424 658.5H451" stroke="#fff"/>
<rect x="423" y="681" width="29" height="2" fill="#fff"/>
<path d="M364 628.5H423" stroke="#fff"/>
<path d="M452 628.5H466" stroke="#fff"/>
<path d="M364.5 628V681" stroke="#fff"/>
<path d="M465.5 628V722" stroke="#fff"/>
<path d="M417 634.5H423" stroke="#fff"/>
<path d="M452 634.5H458" stroke="#fff"/>
<path d="M417.5 634V724" stroke="#fff"/>
<path d="M457.5 634V724" stroke="#fff"/>
<path d="M457 636.5H466" stroke="#fff"/>
<path d="M457 645.5H466" stroke="#fff"/>
<path d="M372 636.5H418" stroke="#fff"/>
<path d="M372.5 636V650" stroke="#fff"/>
<path d="M380.5 636V650" stroke="#fff"/>
<path d="M372 645.5H381" stroke="#fff"/>
<rect x="364.5" y="649.5" width="27" height="19" stroke="#fff" fill="none"/>
<path d="M408.5 636V658" stroke="#fff"/>
<path d="M408 645.5H418" stroke="#fff"/>
<path d="M391 657.5H418" stroke="#fff"/>
<path d="M391 660.5H418" stroke="#fff"/>
<path d="M396.5 657V661" stroke="#fff"/>
<path d="M408.5 660V673" stroke="#fff"/>
<path d="M372 672.5H409" stroke="#fff"/>
<path d="M372.5 668V681" stroke="#fff"/>
<path d="M380.5 668V681" stroke="#fff"/>
<path d="M372 669.5H381" stroke="#fff"/>
<path d="M364 680.5H409" stroke="#fff"/>
<path d="M408.5 680V722" stroke="#fff"/>
<rect x="422.5" y="690.5" width="30" height="22" stroke="#fff" fill="none"/>
<path d="M422.5 688V724" stroke="#fff"/>
<path d="M452.5 688V724" stroke="#fff"/>
<path d="M408 712.5H466" stroke="#fff"/>
<path d="M408 721.5H466" stroke="#fff"/>
<path d="M417 723.5H423" stroke="#fff"/>
<path d="M452 723.5H458" stroke="#fff"/>
<path d="M493.5 601V671" stroke="#00ff00"/>
<path d="M465 667.5H494" stroke="#00ff00"/>
<path d="M465.5 660V671" stroke="#00ff00"/>
<path d="M476 662h1v1h-1zM476 663h1v1h-1zM476 664h1v1h-1zM476 665h1v1h-1zM476 666h1v1h-1zM478 662h1v1h-1zM479 662h1v1h-1zM478 663h1v1h-1zM478 664h1v1h-1zM479 664h1v1h-1zM479 665h1v1h-1zM478 666h1v1h-1zM479 666h1v1h-1zM481 662h1v1h-1zM482 662h1v1h-1zM481 663h1v1h-1zM482 663h1v1h-1zM481 664h1v1h-1zM482 664h1v1h-1zM481 665h1v1h-1zM482 665h1v1h-1zM481 666h1v1h-1zM482 666h1v1h-1z" fill="#00ff00"/>
<rect x="468" y="667" width="4" height="2" fill="#00ff00"/>
<rect x="487" y="667" width="4" height="2" fill="#00ff00"/>
<path d="M895 595.5H1140" stroke="#fff"/>
<path d="M895 605.5H1140" stroke="#fff"/>
<path d="M895 614.5H1140" stroke="#fff"/>
<path d="M895 624.5H1140" stroke="#fff"/>
<path d="M895 633.5H1140" stroke="#fff"/>
<path d="M895 643.5H1140" stroke="#fff"/>
<path d="M895 652.5H1140" stroke="#fff"/>
<path d="M895 662.5H1140" stroke="#fff"/>
<path d="M895 671.5H1140" stroke="#fff"/>
<path d="M895 681.5H1140" stroke="#fff"/>
<path d="M895 690.5H1140" stroke="#fff"/>
<path d="M895 709.5H1140" stroke="#fff"/>
<path d="M895.5 595V710" stroke="#fff"/>
<path d="M906.5 595V710" stroke="#fff"/>
<path d="M960.5 595V710" stroke="#fff"/>
<path d="M1020.5 595V710" stroke="#fff"/>
<path d="M1031.5 595V710" stroke="#fff"/>
<path d="M1082.5 595V710" stroke="#fff"/>
<path d="M1112.5 595V710" stroke="#fff"/>
<path d="M1097.5 595V701" stroke="#fff"/>
<path d="M1082 700.5H1113" stroke="#fff"/>
<path d="M895 719.5H1004" stroke="#fff"/>
<path d="M895 728.5H1004" stroke="#fff"/>
<path d="M895 737.5H1004" stroke="#fff"/>
<path d="M895.5 709V748" stroke="#fff"/>
<path d="M908.5 709V748" stroke="#fff"/>
<path d="M922.5 709V748" stroke="#fff"/>
<path d="M944.5 709V748" stroke="#fff"/>
<path d="M965.5 709V748" stroke="#fff"/>
<path d="M982.5 709V748" stroke="#fff"/>
<path d="M1003.5 709V748" stroke="#fff"/>
<path d="M1071.5 709V748" stroke="#fff"/>
<path d="M1071 732.5H1140" stroke="#fff"/>
<g class="t" fill="#fff" font-size="7.2">
<text x="897" y="603.84" textLength="4.7" lengthAdjust="spacingAndGlyphs">10</text>
<text x="908" y="603.84" textLength="33.1" lengthAdjust="spacingAndGlyphs">GB/T 70.1-2000</text>
<text x="962" y="603.84" textLength="48.5" lengthAdjust="spacingAndGlyphs">内六角圆柱头螺钉M8X30</text>
<text x="1022" y="603.84" textLength="2.7" lengthAdjust="spacingAndGlyphs">4</text>
<text x="1084.4" y="603.84" textLength="6.9" lengthAdjust="spacingAndGlyphs">0.1</text>
<text x="1098.4" y="603.84" textLength="9.6" lengthAdjust="spacingAndGlyphs">0.40</text>
<text x="897" y="613.54" textLength="2.7" lengthAdjust="spacingAndGlyphs">9</text>
<text x="908" y="613.54" textLength="33.1" lengthAdjust="spacingAndGlyphs">GB/T 70.1-2000</text>
<text x="962" y="613.54" textLength="50.6" lengthAdjust="spacingAndGlyphs">内六角圆柱头螺钉M10X25</text>
<text x="1022" y="613.54" textLength="2.7" lengthAdjust="spacingAndGlyphs">4</text>
<text x="1084.4" y="613.54" textLength="6.9" lengthAdjust="spacingAndGlyphs">0.1</text>
<text x="1098.4" y="613.54" textLength="9.6" lengthAdjust="spacingAndGlyphs">0.40</text>
<text x="897" y="623.04" textLength="2.7" lengthAdjust="spacingAndGlyphs">8</text>
<text x="908" y="623.04" textLength="33.1" lengthAdjust="spacingAndGlyphs">GB/T 70.1-2000</text>
<text x="962" y="623.04" textLength="48.5" lengthAdjust="spacingAndGlyphs">内六角圆柱头螺钉M6X20</text>
<text x="1022" y="623.04" textLength="2.7" lengthAdjust="spacingAndGlyphs">2</text>
<text x="1084.4" y="623.04" textLength="6.9" lengthAdjust="spacingAndGlyphs">0.1</text>
<text x="1098.4" y="623.04" textLength="9.6" lengthAdjust="spacingAndGlyphs">0.20</text>
<text x="897" y="632.44" textLength="2.7" lengthAdjust="spacingAndGlyphs">7</text>
<text x="908" y="632.44" textLength="33.1" lengthAdjust="spacingAndGlyphs">GB/T 70.1-2000</text>
<text x="962" y="632.44" textLength="50.6" lengthAdjust="spacingAndGlyphs">内六角圆柱头螺钉M10X25</text>
<text x="1022" y="632.44" textLength="2.7" lengthAdjust="spacingAndGlyphs">8</text>
<text x="1084.4" y="632.44" textLength="6.9" lengthAdjust="spacingAndGlyphs">0.1</text>
<text x="1098.4" y="632.44" textLength="9.6" lengthAdjust="spacingAndGlyphs">0.80</text>
<text x="897" y="641.84" textLength="2.7" lengthAdjust="spacingAndGlyphs">6</text>
<text x="962" y="641.84" textLength="23" lengthAdjust="spacingAndGlyphs">送纸箱装置</text>
<text x="1022" y="641.84" textLength="2.7" lengthAdjust="spacingAndGlyphs">1</text>
<text x="1084.4" y="641.84" textLength="12.3" lengthAdjust="spacingAndGlyphs">20.40</text>
<text x="1098.4" y="641.84" textLength="12.3" lengthAdjust="spacingAndGlyphs">20.40</text>
<text x="897" y="651.54" textLength="2.7" lengthAdjust="spacingAndGlyphs">5</text>
<text x="962" y="651.54" textLength="36.8" lengthAdjust="spacingAndGlyphs">装箱辅助开合装置</text>
<text x="1022" y="651.54" textLength="2.7" lengthAdjust="spacingAndGlyphs">1</text>
<text x="1084.4" y="651.54" textLength="9.6" lengthAdjust="spacingAndGlyphs">0.56</text>
<text x="1098.4" y="651.54" textLength="9.6" lengthAdjust="spacingAndGlyphs">0.56</text>
<text x="897" y="660.64" textLength="2.7" lengthAdjust="spacingAndGlyphs">4</text>
<text x="962" y="660.64" textLength="41.4" lengthAdjust="spacingAndGlyphs">平移装置与分料装置</text>
<text x="1022" y="660.64" textLength="2.7" lengthAdjust="spacingAndGlyphs">1</text>
<text x="1084.4" y="660.64" textLength="9.6" lengthAdjust="spacingAndGlyphs">0.50</text>
<text x="1098.4" y="660.64" textLength="9.6" lengthAdjust="spacingAndGlyphs">0.50</text>
<text x="897" y="670.34" textLength="2.7" lengthAdjust="spacingAndGlyphs">3</text>
<text x="962" y="670.34" textLength="18.4" lengthAdjust="spacingAndGlyphs">顶升装置</text>
<text x="1022" y="670.34" textLength="2.7" lengthAdjust="spacingAndGlyphs">1</text>
<text x="1084.4" y="670.34" textLength="9.6" lengthAdjust="spacingAndGlyphs">4.52</text>
<text x="1098.4" y="670.34" textLength="9.6" lengthAdjust="spacingAndGlyphs">4.52</text>
<text x="897" y="679.74" textLength="2.7" lengthAdjust="spacingAndGlyphs">2</text>
<text x="962" y="679.74" textLength="18.4" lengthAdjust="spacingAndGlyphs">物料装置</text>
<text x="1022" y="679.74" textLength="2.7" lengthAdjust="spacingAndGlyphs">1</text>
<text x="1084.4" y="679.74" textLength="9.6" lengthAdjust="spacingAndGlyphs">0.45</text>
<text x="1098.4" y="679.74" textLength="9.6" lengthAdjust="spacingAndGlyphs">0.45</text>
<text x="897" y="689.44" textLength="2.7" lengthAdjust="spacingAndGlyphs">1</text>
<text x="962" y="689.44" textLength="23" lengthAdjust="spacingAndGlyphs">装箱机机架</text>
<text x="1022" y="689.44" textLength="2.7" lengthAdjust="spacingAndGlyphs">1</text>
<text x="1084.4" y="689.44" textLength="9.6" lengthAdjust="spacingAndGlyphs">3.40</text>
<text x="1098.4" y="689.44" textLength="9.6" lengthAdjust="spacingAndGlyphs">3.40</text>
</g>
<g class="t" fill="#fff">
<text x="896.6" y="705.61" font-size="11.6" textLength="9.2" lengthAdjust="spacingAndGlyphs">序号</text>
<text x="926.3" y="705.61" font-size="11.6" textLength="13.8" lengthAdjust="spacingAndGlyphs">代号</text>
<text x="983.4" y="705.61" font-size="11.6" textLength="13.8" lengthAdjust="spacingAndGlyphs">名称</text>
<text x="1021" y="705.61" font-size="11.6" textLength="9.2" lengthAdjust="spacingAndGlyphs">数量</text>
<text x="1050.2" y="705.61" font-size="11.6" textLength="13.4" lengthAdjust="spacingAndGlyphs">材料</text>
<text x="1084.7" y="699.31" font-size="7.4" textLength="9.4" lengthAdjust="spacingAndGlyphs">单件</text>
<text x="1099.6" y="699.31" font-size="7.4" textLength="9.2" lengthAdjust="spacingAndGlyphs">总计</text>
<text x="1093.4" y="708.41" font-size="6.6" textLength="8.4" lengthAdjust="spacingAndGlyphs">重量</text>
<text x="1119.8" y="705.61" font-size="11.6" textLength="13.4" lengthAdjust="spacingAndGlyphs">备注</text>
</g>
<g class="t" fill="#00ff00" font-size="6.9">
<text x="897" y="746.47" textLength="9.6" lengthAdjust="spacingAndGlyphs">标记</text>
<text x="911" y="746.47" textLength="9.2" lengthAdjust="spacingAndGlyphs">处数</text>
<text x="928.6" y="746.47" textLength="9.6" lengthAdjust="spacingAndGlyphs">分区</text>
<text x="944.6" y="746.47" textLength="20.5" lengthAdjust="spacingAndGlyphs">更改文件号</text>
<text x="969.4" y="746.47" textLength="9.6" lengthAdjust="spacingAndGlyphs">签名</text>
<text x="983" y="746.47" textLength="20" lengthAdjust="spacingAndGlyphs">年、月、日</text>
<text x="1085.3" y="746.47" textLength="41.4" lengthAdjust="spacingAndGlyphs">装箱机总装图</text>
</g>
<g class="t" fill="#00ff00">
<text x="719.4" y="624.05" font-size="9.6" textLength="28.8" lengthAdjust="spacingAndGlyphs">技术要求</text>
<text x="611.8" y="637.21" font-size="7.4" textLength="220.8" lengthAdjust="spacingAndGlyphs">1.零件在装配前必须清理和清洗干净，不得有毛刺、飞边、氧化皮、锈蚀、切屑、油污、着色剂和灰尘等。</text>
<text x="611.8" y="647.11" font-size="7.4" textLength="174" lengthAdjust="spacingAndGlyphs">2.装配前应对零、部件的主要配合尺寸，特别是过盈配合尺寸及相关精度进行复查。</text>
<text x="611.8" y="656.91" font-size="7.4" textLength="99.1" lengthAdjust="spacingAndGlyphs">3.装配过程中零件不允许磕、碰、划伤和锈蚀。</text>
<text x="611.8" y="666.81" font-size="7.4" textLength="244.2" lengthAdjust="spacingAndGlyphs">4.螺钉、螺栓和螺母紧固时，严禁打击或使用不合适的旋具和扳手。紧固后螺钉槽、螺母和螺钉、螺栓头部不得损坏。</text>
</g>
<path d="M240 208.5H253" stroke="#fff"/>
<text class="n" x="243" y="208" font-size="9.5" fill="#fff" textLength="3" lengthAdjust="spacingAndGlyphs">7</text>
<path d="M252.5 208.6L314.4 237.8" stroke="#fff"/>
<path d="M587 77.5H603" stroke="#fff"/>
<text class="n" x="593" y="77" font-size="9.5" fill="#fff" textLength="3" lengthAdjust="spacingAndGlyphs">8</text>
<path d="M602.7 77.5L690.3 120.0" stroke="#fff"/>
<path d="M587 113.5H603" stroke="#fff"/>
<text class="n" x="593" y="112.8" font-size="9.5" fill="#fff" textLength="3" lengthAdjust="spacingAndGlyphs">9</text>
<path d="M602.7 113.3L690.3 133.8" stroke="#fff"/>
<path d="M587 156.5H603" stroke="#fff"/>
<text class="n" x="592" y="155.9" font-size="9.5" fill="#fff" textLength="2.5" lengthAdjust="spacingAndGlyphs">1</text>
<path d="M587.2 156.4L436.4 107.4" stroke="#fff"/>
<path d="M589 184.5H603" stroke="#fff"/>
<text class="n" x="591.9" y="183.9" font-size="9.5" fill="#fff" textLength="5.5" lengthAdjust="spacingAndGlyphs">10</text>
<path d="M589.0 184.4L486.0 259.0" stroke="#fff"/>
<path d="M587 205.5H602" stroke="#fff"/>
<text class="n" x="593" y="204.7" font-size="9.5" fill="#fff" textLength="3" lengthAdjust="spacingAndGlyphs">3</text>
<path d="M601.4 205.2L662.0 243.9" stroke="#fff"/>
<rect x="661" y="243" width="2" height="2" fill="#fff"/>
<path d="M587 264.5H603" stroke="#fff"/>
<text class="n" x="593" y="263.8" font-size="9.5" fill="#fff" textLength="3" lengthAdjust="spacingAndGlyphs">2</text>
<path d="M602.7 264.3L724.9 298.1" stroke="#fff"/>
<rect x="724" y="297" width="2" height="2" fill="#fff"/>
<path d="M587 320.5H603" stroke="#fff"/>
<text class="n" x="593" y="319.6" font-size="9.5" fill="#fff" textLength="3" lengthAdjust="spacingAndGlyphs">4</text>
<path d="M587.7 320.1L359.6 232.6" stroke="#fff"/>
<rect x="357" y="231" width="3" height="1" fill="#fff"/>
<rect x="358" y="232" width="4" height="1" fill="#fff"/>
<path d="M587 381.5H603" stroke="#fff"/>
<text class="n" x="593" y="380.9" font-size="9.5" fill="#fff" textLength="3" lengthAdjust="spacingAndGlyphs">5</text>
<path d="M602.7 381.4L811.5 339.6" stroke="#fff"/>
<rect x="810" y="339" width="3" height="2" fill="#fff"/>
<path d="M588 430.5H603" stroke="#fff"/>
<text class="n" x="593.6" y="429.8" font-size="9.5" fill="#fff" textLength="3" lengthAdjust="spacingAndGlyphs">6</text>
<path d="M588.2 430.3L475.9 521.7" stroke="#fff"/>
<rect x="475" y="521" width="2" height="2" fill="#fff"/>
</svg>
<div style="position:absolute;left:0;top:0;width:1157px;height:26px;background:#f0f0f0"></div>
<div style="position:absolute;left:0;top:22px;width:852px;height:1px;background:#a0a0a0"></div>
<div style="position:absolute;left:0;top:23px;width:1157px;height:1px;background:#f6f6f6"></div>
<div style="position:absolute;left:0;top:24px;width:1157px;height:1px;background:#b4b4b4"></div>
<div style="position:absolute;left:0;top:25px;width:1157px;height:1px;background:#4a4a4a"></div>
<div style="position:absolute;left:0;top:0;width:852px;height:1px;background:#b8b8b8"></div>
<div style="position:absolute;left:-3px;top:1px;width:213px;height:20px;background:#fff;border-radius:2px"></div>
<div style="position:absolute;left:275px;top:1px;width:149px;height:20px;background:#fff;border-radius:2px"></div>
<div style="position:absolute;left:432px;top:1px;width:158px;height:20px;background:#fff;border-radius:2px"></div>
<div style="position:absolute;left:598px;top:1px;width:123px;height:20px;background:#fff;border-radius:2px"></div>
<div style="position:absolute;left:729px;top:1px;width:119px;height:20px;background:#fff;border-radius:2px"></div>
<div style="position:absolute;left:728px;top:0px;width:118px;height:20px;border:1px solid #b0b0b0;border-radius:3px"></div>
<div style="position:absolute;left:731px;top:3px;width:98px;height:16px;background:#f0f0f0"></div>
<div style="position:absolute;left:260px;top:0;width:1px;height:23px;background:#a0a0a0"></div>
<div style="position:absolute;left:266px;top:1px;width:1px;height:20px;background:#fff"></div>
<div style="position:absolute;left:267px;top:1px;width:1px;height:20px;background:#a0a0a0"></div>
<div style="position:absolute;left:270px;top:1px;width:1px;height:20px;background:#fff"></div>
<div style="position:absolute;left:271px;top:1px;width:1px;height:20px;background:#a0a0a0"></div>
<div style="position:absolute;left:427px;top:2px;width:1px;height:18px;background:#8c8c8c"></div>
<div style="position:absolute;left:428px;top:2px;width:1px;height:18px;background:#fff"></div>
<div style="position:absolute;left:593px;top:2px;width:1px;height:18px;background:#8c8c8c"></div>
<div style="position:absolute;left:594px;top:2px;width:1px;height:18px;background:#fff"></div>
<div style="position:absolute;left:724px;top:2px;width:1px;height:18px;background:#8c8c8c"></div>
<div style="position:absolute;left:725px;top:2px;width:1px;height:18px;background:#fff"></div>
<div style="position:absolute;left:851px;top:0;width:1px;height:23px;background:#a0a0a0"></div>
<svg style="position:absolute;left:0;top:0" width="1157" height="26" viewBox="0 0 1157 26">
<path d="M199 10h7l-3.5 4z" fill="#000"/>
<path d="M413.5 10h7l-3.5 4z" fill="#000"/>
<path d="M579.5 10h7l-3.5 4z" fill="#000"/>
<path d="M710.5 10h7l-3.5 4z" fill="#000"/>
<path d="M836 10h7l-3.5 4z" fill="#9a9a9a"/>
<text x="-3.5" y="15.04" font-family="'Liberation Sans','Noto Sans CJK SC',sans-serif" font-size="12.2" fill="#000">粗实线层</text>
<text x="737.5" y="14.24" font-family="'Liberation Sans','Noto Sans CJK SC',sans-serif" font-size="12.2" fill="#6d6d6d">随颜色</text>
<rect x="281.5" y="6.5" width="9" height="9" fill="#fff" stroke="#000"/>
<path d="M436 11.5H496" stroke="#000" shape-rendering="crispEdges"/>
<rect x="602" y="10" width="35" height="3" fill="#000"/>
<text x="295" y="14.8" font-family="Liberation Serif,serif" font-size="11.8" textLength="41" lengthAdjust="spacingAndGlyphs" fill="#000">ByLayer</text>
<text x="500.5" y="14.8" font-family="Liberation Serif,serif" font-size="11.8" textLength="41" lengthAdjust="spacingAndGlyphs" fill="#000">ByLayer</text>
<text x="642" y="14.8" font-family="Liberation Serif,serif" font-size="11.8" textLength="41" lengthAdjust="spacingAndGlyphs" fill="#000">ByLayer</text>
<g transform="translate(213,2)"><path d="M1.3 9.6L4.8 8 8.9 10.4 13.6 8 16.9 10.3 9.6 14.6z" fill="#f4d414"/><path d="M1.3 9.8L9.6 14.7 16.9 10.5" fill="none" stroke="#c8a206" stroke-width="1"/><path d="M1.3 7.6L8.9 11.2 15.5 7.4 15.5 5.6 8.9 9 1.3 5.8z" fill="#fbfcfe"/><path d="M1.3 6L8.9 9.2 15.5 5.7M1.3 7.7L8.9 11 15.5 7.4" fill="none" stroke="#3d5f96" stroke-width=".9"/><path d="M1.3 4.9L8.6 0.8 15.5 3.9 8.9 7.4z" fill="#b4cbe6"/><path d="M1.3 4.9L8.9 7.6 15.5 3.9" fill="none" stroke="#7f9ec8" stroke-width=".7"/><path d="M1 16.8L4.4 13.9" fill="none" stroke="#16306e" stroke-width="1.4"/><path d="M2.6 12.8h3.2v3.2z" fill="#16306e"/></g>
<g transform="translate(236,2)"><path d="M2 6.5L8.5 3 15.5 6 9 9.5z" fill="#b9d0ea" stroke="#7d9cc4" stroke-width=".6"/><path d="M2 9L9 12 16 8.5" fill="none" stroke="#3b5a8c" stroke-width="1"/><path d="M2 11.3L9.5 15 16.5 11.5 14.5 10.4 9.2 13 4.2 10.6z" fill="#c5d8ee" stroke="#5b7db0" stroke-width=".6"/><path d="M6.2 8.2C5 4 8 1.6 10.6 1.6c2.4 0 4 1.6 4.2 3.6" fill="none" stroke="#1c3f86" stroke-width="1.6"/><path d="M3.6 6.6l5-.6-2.2 4.2z" fill="#1c3f86"/><circle cx="11.3" cy="6" r="2.2" fill="#a9c3e4"/></g>
</svg>
<div style="position:absolute;left:18px;top:748px;width:1139px;height:3px;background:#f0f0f0"></div>
<div style="position:absolute;left:18px;top:748px;width:1139px;height:1px;background:#fdfdfd"></div>
<div style="position:absolute;left:0;top:749px;width:5px;height:1px;background:#fff"></div>
<div style="position:absolute;left:0;top:750px;width:1px;height:1px;background:#fff"></div>
<div style="position:absolute;left:4px;top:750px;width:1px;height:1px;background:#fff"></div>
<div style="position:absolute;left:6px;top:749px;width:1px;height:2px;background:#ddd"></div>
<div style="position:absolute;left:8px;top:749px;width:1px;height:2px;background:#fff"></div>
<div style="position:absolute;left:16px;top:747px;width:1px;height:4px;background:#a0a0a0"></div>
<div style="position:absolute;left:22px;top:750px;width:3px;height:1px;background:#222"></div>
<div style="position:absolute;left:60px;top:750px;width:1px;height:1px;background:#333"></div>
<div style="position:absolute;left:70px;top:748px;width:1px;height:3px;background:#999"></div>
<div style="position:absolute;left:71px;top:748px;width:1px;height:3px;background:#000"></div>
</body></html>
